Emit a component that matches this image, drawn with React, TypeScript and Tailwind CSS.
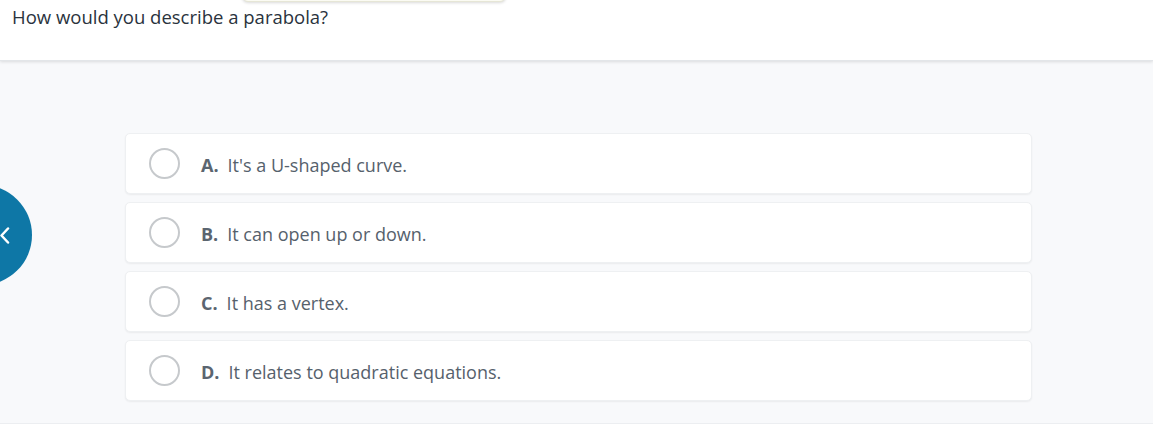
import React from "react";

const options = [
  { letter: "A.", text: "It's a U-shaped curve." },
  { letter: "B.", text: "It can open up or down." },
  { letter: "C.", text: "It has a vertex." },
  { letter: "D.", text: "It relates to quadratic equations." },
];

export default function App() {
  return (
    <div
      className="relative w-[1153px] h-[426px] overflow-hidden bg-white"
      style={{ fontFamily: "'Open Sans', 'Noto Sans', sans-serif" }}
    >
      <div className="absolute z-20 left-[242px] top-[-20px] w-[264px] h-[22px] rounded-b-md bg-[#fbfbf3] border border-[#e6e6d6] shadow-[0_1px_3px_rgba(0,0,0,0.15)]" />
      <div className="h-[61px] bg-white px-3 pt-[4px] shadow-[0_1px_3px_rgba(0,0,0,0.12)] border-b border-[#e3e6e9] relative z-10">
        <p className="text-[18.5px] leading-[26px] text-[#2a333d]">How would you describe a parabola?</p>
      </div>
      <div className="h-[363px] bg-[#f8f9fb] border-b border-[#eceef1] relative pt-[72px]">
        <div className="absolute left-[-68px] top-[124px] w-[100px] h-[100px] rounded-full bg-[#0e77a6] flex items-center justify-end pr-[22px]">
          <svg width="11" height="17" viewBox="0 0 11 17" fill="none">
            <path d="M9 1.5 L2.5 8.5 L9 15.5" stroke="white" strokeWidth="2.5" strokeLinecap="round" strokeLinejoin="round" />
          </svg>
        </div>
        <div className="ml-[125px] w-[907px] flex flex-col gap-[8px]">
          {options.map((o) => (
            <div
              key={o.letter}
              className="h-[61px] bg-white rounded-[5px] border border-[#eef0f2] shadow-[0_1px_2px_rgba(0,0,0,0.06)] flex items-center pl-[23px]"
            >
              <div className="w-[31px] h-[31px] rounded-full border-2 border-[#c6c9cc] shrink-0" />
              <span className="ml-[21px] text-[18px] font-bold text-[#5b6570] pt-[3px]">{o.letter}</span>
              <span className="ml-[9px] text-[18px] text-[#56616c] pt-[3px]">{o.text}</span>
            </div>
          ))}
        </div>
      </div>
    </div>
  );
}
